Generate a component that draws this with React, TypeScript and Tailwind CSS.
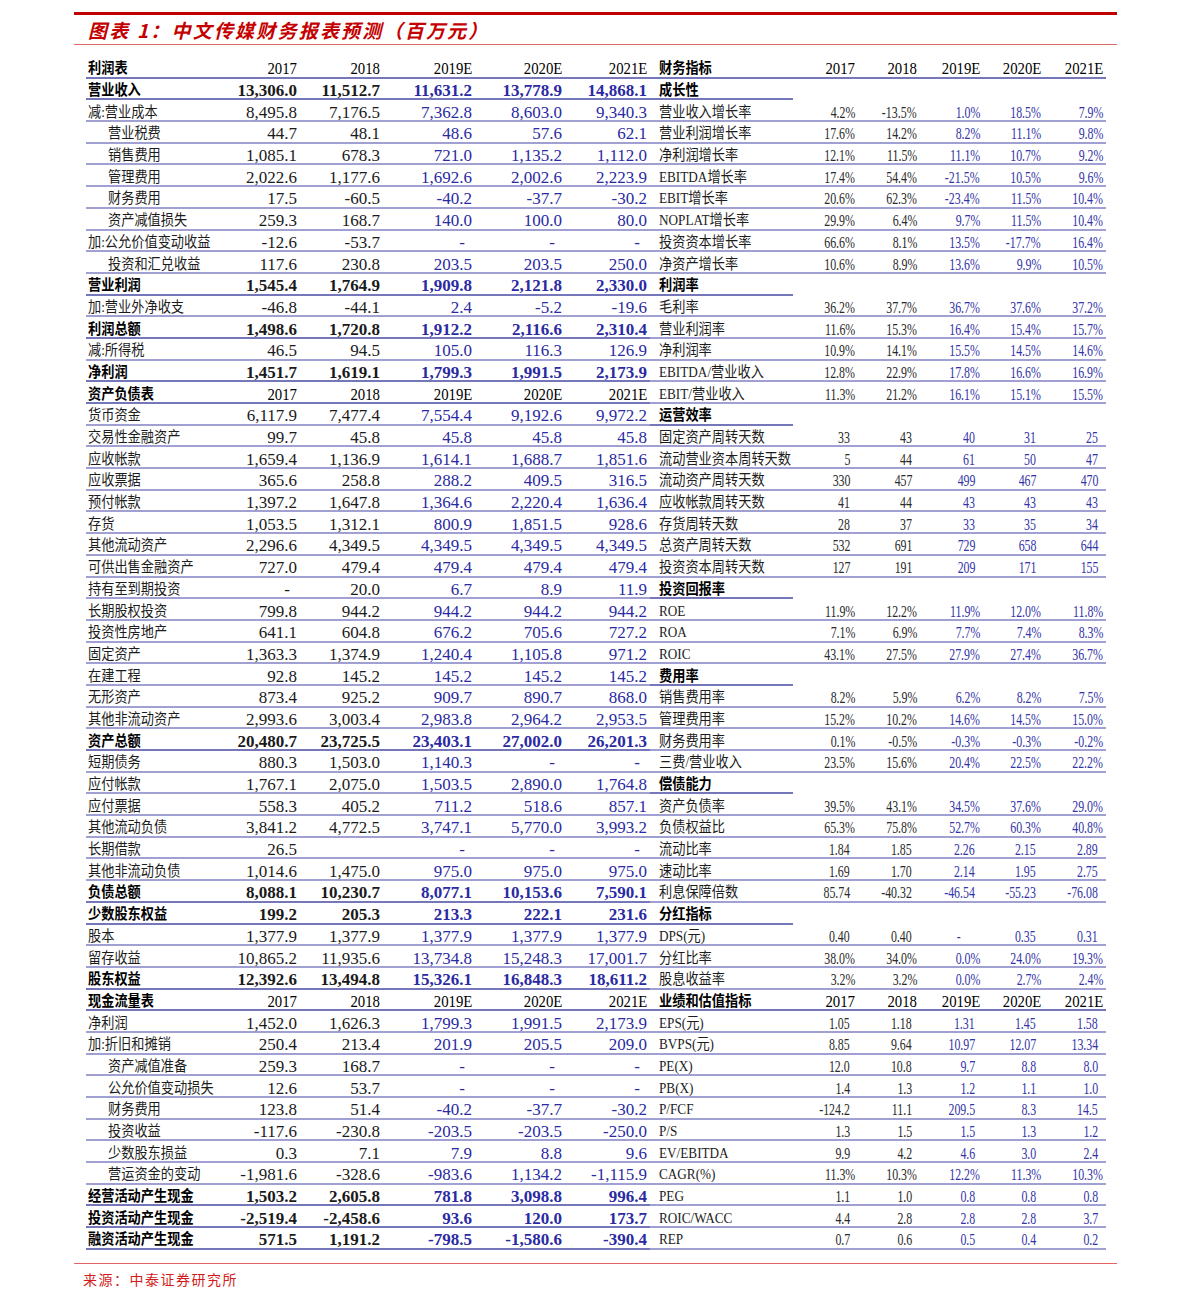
import clsx from 'clsx'

type Row = { t: string; i?: boolean; b?: boolean; h?: boolean; s?: boolean; v: string[] }

const YEARS = '2017 2018 2019E 2020E 2021E'

// v: space separated values, '_' = empty cell
const r = (t: string, v = '', o: Partial<Row> = {}): Row => ({ t, v: v ? v.split(' ') : [], ...o })
const ind = { i: true }
const bold = { b: true }
const head = { h: true, b: true }
const sec = { s: true, b: true }

const LEFT: Row[] = [
  r('利润表', YEARS, head),
  r('营业收入', '13,306.0 11,512.7 11,631.2 13,778.9 14,868.1', bold),
  r('减:营业成本', '8,495.8 7,176.5 7,362.8 8,603.0 9,340.3'),
  r('营业税费', '44.7 48.1 48.6 57.6 62.1', ind),
  r('销售费用', '1,085.1 678.3 721.0 1,135.2 1,112.0', ind),
  r('管理费用', '2,022.6 1,177.6 1,692.6 2,002.6 2,223.9', ind),
  r('财务费用', '17.5 -60.5 -40.2 -37.7 -30.2', ind),
  r('资产减值损失', '259.3 168.7 140.0 100.0 80.0', ind),
  r('加:公允价值变动收益', '-12.6 -53.7 - - -'),
  r('投资和汇兑收益', '117.6 230.8 203.5 203.5 250.0', ind),
  r('营业利润', '1,545.4 1,764.9 1,909.8 2,121.8 2,330.0', bold),
  r('加:营业外净收支', '-46.8 -44.1 2.4 -5.2 -19.6'),
  r('利润总额', '1,498.6 1,720.8 1,912.2 2,116.6 2,310.4', bold),
  r('减:所得税', '46.5 94.5 105.0 116.3 126.9'),
  r('净利润', '1,451.7 1,619.1 1,799.3 1,991.5 2,173.9', bold),
  r('资产负债表', YEARS, head),
  r('货币资金', '6,117.9 7,477.4 7,554.4 9,192.6 9,972.2'),
  r('交易性金融资产', '99.7 45.8 45.8 45.8 45.8'),
  r('应收帐款', '1,659.4 1,136.9 1,614.1 1,688.7 1,851.6'),
  r('应收票据', '365.6 258.8 288.2 409.5 316.5'),
  r('预付帐款', '1,397.2 1,647.8 1,364.6 2,220.4 1,636.4'),
  r('存货', '1,053.5 1,312.1 800.9 1,851.5 928.6'),
  r('其他流动资产', '2,296.6 4,349.5 4,349.5 4,349.5 4,349.5'),
  r('可供出售金融资产', '727.0 479.4 479.4 479.4 479.4'),
  r('持有至到期投资', '- 20.0 6.7 8.9 11.9'),
  r('长期股权投资', '799.8 944.2 944.2 944.2 944.2'),
  r('投资性房地产', '641.1 604.8 676.2 705.6 727.2'),
  r('固定资产', '1,363.3 1,374.9 1,240.4 1,105.8 971.2'),
  r('在建工程', '92.8 145.2 145.2 145.2 145.2'),
  r('无形资产', '873.4 925.2 909.7 890.7 868.0'),
  r('其他非流动资产', '2,993.6 3,003.4 2,983.8 2,964.2 2,953.5'),
  r('资产总额', '20,480.7 23,725.5 23,403.1 27,002.0 26,201.3', bold),
  r('短期债务', '880.3 1,503.0 1,140.3 - -'),
  r('应付帐款', '1,767.1 2,075.0 1,503.5 2,890.0 1,764.8'),
  r('应付票据', '558.3 405.2 711.2 518.6 857.1'),
  r('其他流动负债', '3,841.2 4,772.5 3,747.1 5,770.0 3,993.2'),
  r('长期借款', '26.5 _ - - -'),
  r('其他非流动负债', '1,014.6 1,475.0 975.0 975.0 975.0'),
  r('负债总额', '8,088.1 10,230.7 8,077.1 10,153.6 7,590.1', bold),
  r('少数股东权益', '199.2 205.3 213.3 222.1 231.6', bold),
  r('股本', '1,377.9 1,377.9 1,377.9 1,377.9 1,377.9'),
  r('留存收益', '10,865.2 11,935.6 13,734.8 15,248.3 17,001.7'),
  r('股东权益', '12,392.6 13,494.8 15,326.1 16,848.3 18,611.2', bold),
  r('现金流量表', YEARS, head),
  r('净利润', '1,452.0 1,626.3 1,799.3 1,991.5 2,173.9'),
  r('加:折旧和摊销', '250.4 213.4 201.9 205.5 209.0'),
  r('资产减值准备', '259.3 168.7 - - -', ind),
  r('公允价值变动损失', '12.6 53.7 - - -', ind),
  r('财务费用', '123.8 51.4 -40.2 -37.7 -30.2', ind),
  r('投资收益', '-117.6 -230.8 -203.5 -203.5 -250.0', ind),
  r('少数股东损益', '0.3 7.1 7.9 8.8 9.6', ind),
  r('营运资金的变动', '-1,981.6 -328.6 -983.6 1,134.2 -1,115.9', ind),
  r('经营活动产生现金', '1,503.2 2,605.8 781.8 3,098.8 996.4', bold),
  r('投资活动产生现金', '-2,519.4 -2,458.6 93.6 120.0 173.7', bold),
  r('融资活动产生现金', '571.5 1,191.2 -798.5 -1,580.6 -390.4', bold),
]

const RIGHT: Row[] = [
  r('财务指标', YEARS, head),
  r('成长性', '', sec),
  r('营业收入增长率', '4.2% -13.5% 1.0% 18.5% 7.9%'),
  r('营业利润增长率', '17.6% 14.2% 8.2% 11.1% 9.8%'),
  r('净利润增长率', '12.1% 11.5% 11.1% 10.7% 9.2%'),
  r('EBITDA增长率', '17.4% 54.4% -21.5% 10.5% 9.6%'),
  r('EBIT增长率', '20.6% 62.3% -23.4% 11.5% 10.4%'),
  r('NOPLAT增长率', '29.9% 6.4% 9.7% 11.5% 10.4%'),
  r('投资资本增长率', '66.6% 8.1% 13.5% -17.7% 16.4%'),
  r('净资产增长率', '10.6% 8.9% 13.6% 9.9% 10.5%'),
  r('利润率', '', sec),
  r('毛利率', '36.2% 37.7% 36.7% 37.6% 37.2%'),
  r('营业利润率', '11.6% 15.3% 16.4% 15.4% 15.7%'),
  r('净利润率', '10.9% 14.1% 15.5% 14.5% 14.6%'),
  r('EBITDA/营业收入', '12.8% 22.9% 17.8% 16.6% 16.9%'),
  r('EBIT/营业收入', '11.3% 21.2% 16.1% 15.1% 15.5%'),
  r('运营效率', '', sec),
  r('固定资产周转天数', '33 43 40 31 25'),
  r('流动营业资本周转天数', '5 44 61 50 47'),
  r('流动资产周转天数', '330 457 499 467 470'),
  r('应收帐款周转天数', '41 44 43 43 43'),
  r('存货周转天数', '28 37 33 35 34'),
  r('总资产周转天数', '532 691 729 658 644'),
  r('投资资本周转天数', '127 191 209 171 155'),
  r('投资回报率', '', sec),
  r('ROE', '11.9% 12.2% 11.9% 12.0% 11.8%'),
  r('ROA', '7.1% 6.9% 7.7% 7.4% 8.3%'),
  r('ROIC', '43.1% 27.5% 27.9% 27.4% 36.7%'),
  r('费用率', '', sec),
  r('销售费用率', '8.2% 5.9% 6.2% 8.2% 7.5%'),
  r('管理费用率', '15.2% 10.2% 14.6% 14.5% 15.0%'),
  r('财务费用率', '0.1% -0.5% -0.3% -0.3% -0.2%'),
  r('三费/营业收入', '23.5% 15.6% 20.4% 22.5% 22.2%'),
  r('偿债能力', '', sec),
  r('资产负债率', '39.5% 43.1% 34.5% 37.6% 29.0%'),
  r('负债权益比', '65.3% 75.8% 52.7% 60.3% 40.8%'),
  r('流动比率', '1.84 1.85 2.26 2.15 2.89'),
  r('速动比率', '1.69 1.70 2.14 1.95 2.75'),
  r('利息保障倍数', '85.74 -40.32 -46.54 -55.23 -76.08'),
  r('分红指标', '', sec),
  r('DPS(元)', '0.40 0.40 - 0.35 0.31'),
  r('分红比率', '38.0% 34.0% 0.0% 24.0% 19.3%'),
  r('股息收益率', '3.2% 3.2% 0.0% 2.7% 2.4%'),
  r('业绩和估值指标', YEARS, head),
  r('EPS(元)', '1.05 1.18 1.31 1.45 1.58'),
  r('BVPS(元)', '8.85 9.64 10.97 12.07 13.34'),
  r('PE(X)', '12.0 10.8 9.7 8.8 8.0'),
  r('PB(X)', '1.4 1.3 1.2 1.1 1.0'),
  r('P/FCF', '-124.2 11.1 209.5 8.3 14.5'),
  r('P/S', '1.3 1.5 1.5 1.3 1.2'),
  r('EV/EBITDA', '9.9 4.2 4.6 3.0 2.4'),
  r('CAGR(%)', '11.3% 10.3% 12.2% 11.3% 10.3%'),
  r('PEG', '1.1 1.0 0.8 0.8 0.8'),
  r('ROIC/WACC', '4.4 2.8 2.8 2.8 3.7'),
  r('REP', '0.7 0.6 0.5 0.4 0.2'),
]

const LW = ['w-[70px]', 'w-[83px]', 'w-[92px]', 'w-[90px]', 'w-[85px]']
const RW = ['w-[65px]', 'w-[62px]', 'w-[63px]', 'w-[61px]', 'w-[62px]']

const line = (row: Row) => (row.b ? 'border-[#7676ba]' : 'border-[#a0a0d2]')

function Label({ row, className }: { row: Row; className: string }) {
  return (
    <div className={clsx('shrink-0 flex items-center pt-[4px] border-b-2 overflow-visible', line(row), className)}>
      <span
        className={clsx(
          'inline-block origin-left scale-x-[0.88] whitespace-nowrap text-[15px] leading-none',
          row.b ? 'font-bold text-black' : 'text-[#1c1c1c]'
        )}
      >
        {row.t}
      </span>
    </div>
  )
}

function LeftCell({ row, v, k }: { row: Row; v: string; k: number }) {
  const est = k >= 2
  return (
    <div className={clsx('shrink-0 flex items-center justify-end pt-[4px] border-b-2 pr-[3px]', line(row), LW[k])}>
      {row.h ? (
        <span className="inline-block origin-right scale-x-[0.87] text-[17px] leading-none text-black">{v}</span>
      ) : v === '_' ? null : (
        <span
          className={clsx(
            'text-[17px] leading-none whitespace-nowrap',
            v === '-' && 'mr-[7px]',
            row.b && 'font-bold',
            est ? 'text-[#2a2aa3]' : 'text-[#1a1a1a]'
          )}
        >
          {v}
        </span>
      )}
    </div>
  )
}

function RightCell({ row, v, k }: { row: Row; v?: string; k: number }) {
  if (row.s) return <div className={clsx('shrink-0', RW[k])} />
  const est = k >= 2
  const pct = v?.endsWith('%')
  return (
    <div
      className={clsx(
        'shrink-0 flex items-center justify-end pt-[4px] border-b-2',
        line(row),
        RW[k],
        row.h || pct ? 'pr-[3px]' : v === '-' ? 'pr-[22px]' : 'pr-[8px]'
      )}
    >
      {row.h ? (
        <span className="inline-block origin-right scale-x-[0.87] text-[17px] leading-none text-black">{v}</span>
      ) : (
        <span
          className={clsx(
            'inline-block origin-right scale-x-[0.7] text-[17px] leading-none whitespace-nowrap',
            est ? 'text-[#3434a8]' : 'text-[#2a2a2a]'
          )}
        >
          {v}
        </span>
      )}
    </div>
  )
}

export default function App() {
  return (
    <div className="min-h-screen bg-white [font-family:'Liberation_Serif','Noto_Sans_CJK_SC',serif]">
      <div className="ml-[74px] w-[1043px] pt-[12px]">
        <div className="h-[3px] bg-[#c00000]" />
        <div className="h-[30px] flex items-center pl-[14px] border-b border-[#e06a6a]">
          <span className="text-[19px] font-bold italic tracking-[2.2px] text-[#c40000] leading-none [font-family:'Noto_Sans_CJK_SC',sans-serif]">
            图表 1：中文传媒财务报表预测（百万元）
          </span>
        </div>

        {/* Table */}
        <div className="mt-[12px] ml-[12px] w-[1020px]">
          {LEFT.map((l, idx) => {
            const rr = RIGHT[idx]
            return (
              <div key={idx} className="flex h-[21.7px]">
                <Label row={l} className={clsx('w-[144px]', l.i ? 'pl-[22px]' : 'pl-[2px]')} />
                {l.v.map((v, k) => (
                  <LeftCell key={k} row={l} v={v} k={k} />
                ))}
                <Label row={rr} className="w-[143px] pl-[9px]" />
                {[0, 1, 2, 3, 4].map(k => (
                  <RightCell key={k} row={rr} v={rr.v[k]} k={k} />
                ))}
              </div>
            )
          })}
        </div>

        <div className="mt-[13px] h-px bg-[#e46464]" />
        <div className="pl-[9px] pt-[10px] text-[14px] leading-none tracking-[1.5px] text-[#d21c1c]">来源：中泰证券研究所</div>
      </div>
    </div>
  )
}
